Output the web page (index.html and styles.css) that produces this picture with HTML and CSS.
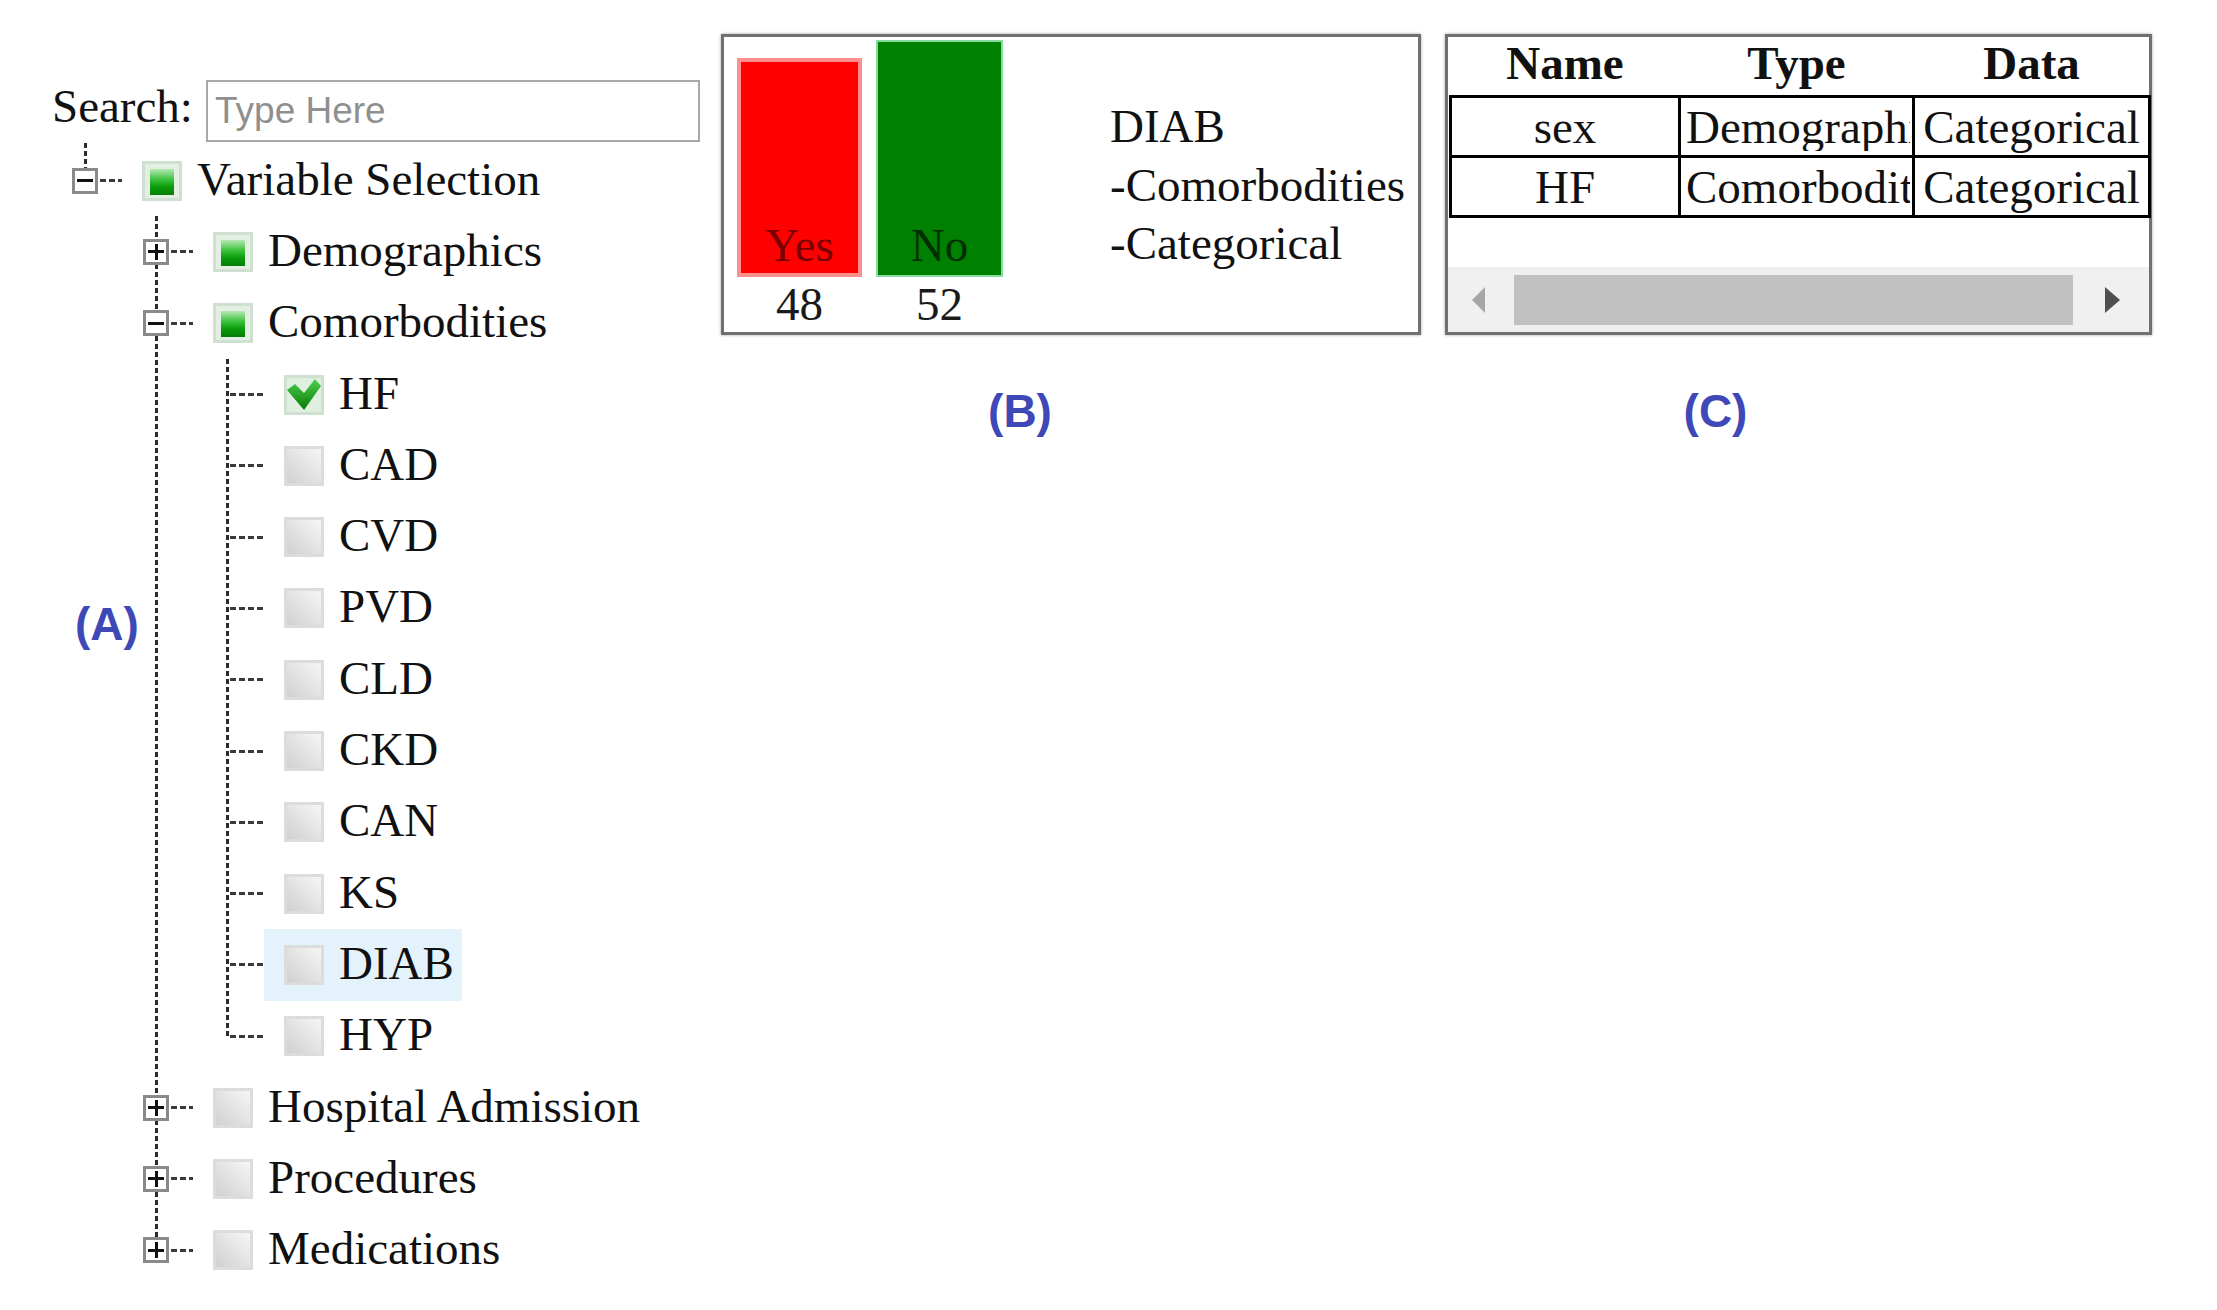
FILE: index.html
```html
<!DOCTYPE html>
<html lang="en">
<head>
<meta charset="utf-8">
<title>Variable Selection</title>
<link rel="stylesheet" href="styles.css">
</head>
<body>
<div class="page">
  <div class="left">
    <div class="search">
      <label class="search-label" for="q">Search:</label>
      <input id="q" type="text" placeholder="Type Here">
    </div>
    <div class="tree">
      <div class="row l0"><span class="tog minus"><i class="up"></i></span><span class="dash"></span><span class="item"><span class="cb part"></span><span class="lbl">Variable Selection</span></span></div>
      <div class="kids k1">
        <div class="row l1"><span class="tog plus"></span><span class="dash"></span><span class="item"><span class="cb part"></span><span class="lbl">Demographics</span></span></div>
        <div class="row l1"><span class="tog minus"></span><span class="dash"></span><span class="item"><span class="cb part"></span><span class="lbl">Comorbodities</span></span></div>
        <div class="kids k2">
          <div class="row l2"><span class="tog leaf"></span><span class="dash"></span><span class="item"><span class="cb on"><svg viewBox="0 0 34 34" width="34" height="34"><defs><linearGradient id="gck" x1="0" y1="0" x2="0" y2="1"><stop offset="0" stop-color="#4fd04f"/><stop offset="1" stop-color="#067a06"/></linearGradient></defs><polygon points="0,12 8,6 17,15 28,1 34,8 17,32" fill="url(#gck)"/></svg></span><span class="lbl">HF</span></span></div>
          <div class="row l2"><span class="tog leaf"></span><span class="dash"></span><span class="item"><span class="cb"></span><span class="lbl">CAD</span></span></div>
          <div class="row l2"><span class="tog leaf"></span><span class="dash"></span><span class="item"><span class="cb"></span><span class="lbl">CVD</span></span></div>
          <div class="row l2"><span class="tog leaf"></span><span class="dash"></span><span class="item"><span class="cb"></span><span class="lbl">PVD</span></span></div>
          <div class="row l2"><span class="tog leaf"></span><span class="dash"></span><span class="item"><span class="cb"></span><span class="lbl">CLD</span></span></div>
          <div class="row l2"><span class="tog leaf"></span><span class="dash"></span><span class="item"><span class="cb"></span><span class="lbl">CKD</span></span></div>
          <div class="row l2"><span class="tog leaf"></span><span class="dash"></span><span class="item"><span class="cb"></span><span class="lbl">CAN</span></span></div>
          <div class="row l2"><span class="tog leaf"></span><span class="dash"></span><span class="item"><span class="cb"></span><span class="lbl">KS</span></span></div>
          <div class="row l2"><span class="tog leaf"></span><span class="dash"></span><span class="item sel"><span class="cb"></span><span class="lbl">DIAB</span></span></div>
          <div class="row l2"><span class="tog leaf"></span><span class="dash"></span><span class="item"><span class="cb"></span><span class="lbl">HYP</span></span></div>
        </div>
        <div class="row l1"><span class="tog plus"></span><span class="dash"></span><span class="item"><span class="cb"></span><span class="lbl">Hospital Admission</span></span></div>
        <div class="row l1"><span class="tog plus"></span><span class="dash"></span><span class="item"><span class="cb"></span><span class="lbl">Procedures</span></span></div>
        <div class="row l1"><span class="tog plus"></span><span class="dash"></span><span class="item"><span class="cb"></span><span class="lbl">Medications</span></span></div>
      </div>
    </div>
    <div class="tag tag-a">(A)</div>
  </div>

  <div class="right">
    <div class="fig fig-b">
      <div class="panel panel-b">
        <div class="chart">
          <div class="bar-col">
            <div class="bar yes" style="height:219px">Yes</div>
            <div class="count">48</div>
          </div>
          <div class="bar-col">
            <div class="bar no" style="height:237px">No</div>
            <div class="count">52</div>
          </div>
        </div>
        <div class="info">
          <div>DIAB</div>
          <div>-Comorbodities</div>
          <div>-Categorical</div>
        </div>
      </div>
      <div class="tag cap">(B)</div>
    </div>

    <div class="fig fig-c">
      <div class="panel panel-c">
        <table class="grid">
          <colgroup><col class="c1"><col class="c2"><col class="c3"></colgroup>
          <thead>
            <tr><th>Name</th><th>Type</th><th>Data</th></tr>
          </thead>
          <tbody>
            <tr><td>sex</td><td class="l"><span class="clip">Demographics</span></td><td>Categorical</td></tr>
            <tr><td>HF</td><td class="l"><span class="clip">Comorbodities</span></td><td>Categorical</td></tr>
          </tbody>
        </table>
        <div class="hscroll">
          <span class="arr-l"></span>
          <span class="thumb"></span>
          <span class="arr-r"></span>
        </div>
      </div>
      <div class="tag cap">(C)</div>
    </div>
  </div>
</div>
</body>
</html>
```

FILE: styles.css
```css
html, body {
  margin: 0;
  padding: 0;
  background: #ffffff;
}

body {
  font-family: "Liberation Serif", "Times New Roman", serif;
  color: #111111;
}

.page {
  display: flex;
  width: 2217px;
  height: 1310px;
  overflow: hidden;
}

/* ---------- left: search + tree ---------- */
.left {
  position: relative;
  flex: none;
  width: 721px;
  padding-top: 80px;
  box-sizing: border-box;
}

.search {
  display: flex;
  align-items: flex-start;
  padding-left: 52px;
  height: 62px;
}

.search-label {
  flex: none;
  width: 154px;
  font-size: 47px;
  line-height: 62px;
  margin-top: -5px;
}

.search input {
  flex: none;
  width: 494px;
  height: 62px;
  box-sizing: border-box;
  margin: 0;
  border: 2px solid #a9a9a9;
  padding: 0 0 0 7px;
  font-family: "Liberation Sans", Arial, sans-serif;
  font-size: 37px;
  color: #333;
  background: #fff;
  outline: none;
}

.search input::placeholder {
  color: #8f8f8f;
}

.tree {
  margin-top: 3px;
}

.row {
  display: flex;
  align-items: center;
  height: 71.3px;
}

.l0 { padding-left: 72px; }
.l1 { padding-left: 143px; }
.l2 { padding-left: 214px; }

.kids {
  position: relative;
}

.kids::before {
  content: "";
  position: absolute;
  top: 0;
  bottom: 35.65px;
  width: 3px;
  background: repeating-linear-gradient(to bottom, #2a2a2a 0 5px, transparent 5px 8px);
}

.k1::before { left: 155px; }
.k2::before { left: 226px; }

.tog {
  position: relative;
  flex: none;
  width: 26px;
  height: 26px;
  box-sizing: border-box;
  border: 3px solid #8a8a8a;
  background: #fff;
}

.tog.leaf {
  border: 0;
  background: transparent;
}

.minus::before,
.plus::before {
  content: "";
  position: absolute;
  left: 2px;
  right: 2px;
  top: 50%;
  height: 3px;
  margin-top: -1.5px;
  background: #111;
}

.plus::after {
  content: "";
  position: absolute;
  top: 2px;
  bottom: 2px;
  left: 50%;
  width: 3px;
  margin-left: -1.5px;
  background: #111;
}

.up {
  position: absolute;
  left: 9px;
  bottom: calc(100% + 3px);
  width: 3px;
  height: 25px;
  background: repeating-linear-gradient(to bottom, #2a2a2a 0 5px, transparent 5px 8px);
}

.dash {
  flex: none;
  width: 22px;
  height: 3px;
  margin-left: 2px;
  background: repeating-linear-gradient(to right, #3a3a3a 0 6px, transparent 6px 9px);
}

.l2 .dash {
  margin-left: -10px;
  width: 34px;
}

.item {
  display: flex;
  align-items: center;
  align-self: stretch;
  padding: 0 8px 0 20px;
}

.item.sel {
  background: #e4f2fb;
}

.cb {
  position: relative;
  flex: none;
  width: 40px;
  height: 40px;
  box-sizing: border-box;
  border: 3px solid #dcdcdc;
  background: linear-gradient(45deg, #d0d0d0, #f6f6f6);
}

.cb.part {
  border-color: #d0e0d0;
  background: #e3efe3;
}

.cb.part::after {
  content: "";
  position: absolute;
  left: 5px;
  right: 5px;
  top: 5px;
  bottom: 3px;
  background: linear-gradient(to bottom, #b5e8b5 0%, #3cc23c 40%, #0a9a0a 70%, #067e06 100%);
}

.cb.on {
  border-color: #d0e0d0;
  background: #e0f0e0;
}

.cb.on svg {
  display: block;
}

.lbl {
  font-size: 47px;
  line-height: 48px;
  margin-left: 15px;
  margin-bottom: 4px;
  white-space: nowrap;
}

/* ---------- labels ---------- */
.tag {
  font-family: "Liberation Sans", Arial, sans-serif;
  font-weight: bold;
  font-size: 46px;
  line-height: 52px;
  color: #3e48b6;
}

.tag-a {
  position: absolute;
  left: 75px;
  top: 598px;
}

/* ---------- right: panels ---------- */
.right {
  display: flex;
  align-items: flex-start;
  gap: 24px;
  padding-top: 34px;
}

.fig {
  display: flex;
  flex-direction: column;
}

.panel {
  height: 301px;
  box-sizing: border-box;
  border: 3px solid #707070;
  box-shadow: 0 0 3px rgba(0, 0, 0, 0.35);
  background: #fff;
}

.cap {
  margin-top: 50px;
  text-align: center;
}

.fig-b .cap { padding-right: 102px; }
.fig-c .cap { padding-right: 166px; }

/* panel B */
.panel-b {
  width: 700px;
  display: flex;
  align-items: flex-start;
}

.chart {
  display: flex;
  gap: 14px;
  padding-left: 13px;
  height: 100%;
}

.bar-col {
  display: flex;
  flex-direction: column;
  justify-content: flex-end;
}

.bar {
  display: flex;
  align-items: flex-end;
  justify-content: center;
  box-sizing: border-box;
  font-size: 47px;
  line-height: 48px;
}

.bar.yes {
  width: 125px;
  background: #ff0000;
  border: 4px solid #ff8f8f;
  padding-bottom: 4px;
  color: #7a0000;
}

.bar.no {
  width: 127px;
  background: #008000;
  border: 2px solid #86dca0;
  padding-bottom: 6px;
  color: #002e00;
}

.count {
  height: 55px;
  line-height: 55px;
  font-size: 47px;
  text-align: center;
  color: #1a1a1a;
}

.info {
  margin: 60px 0 0 107px;
  font-size: 47px;
  line-height: 58.5px;
  white-space: nowrap;
}

/* panel C */
.panel-c {
  width: 707px;
  display: flex;
  flex-direction: column;
}

.grid {
  border-collapse: collapse;
  table-layout: fixed;
  width: 699px;
  margin-left: 1px;
  font-size: 47px;
}

.grid col.c1 { width: 229px; }
.grid col.c2 { width: 234px; }
.grid col.c3 { width: 236px; }

.grid th {
  height: 56px;
  padding: 2px 0 0;
  vertical-align: top;
  line-height: 48px;
  font-weight: bold;
  text-align: center;
}

.grid td {
  height: 57px;
  padding: 0 2px;
  border: 3px solid #000;
  line-height: 48px;
  text-align: center;
  white-space: nowrap;
  overflow: hidden;
  vertical-align: middle;
}

.grid td.l {
  text-align: left;
  padding-left: 5px;
}

.clip {
  display: block;
  overflow: hidden;
  white-space: nowrap;
}

.hscroll {
  margin-top: auto;
  height: 65px;
  background: #f0f0f0;
  display: flex;
  align-items: center;
}

.arr-l {
  flex: none;
  margin-left: 24px;
  width: 0;
  height: 0;
  border-top: 13px solid transparent;
  border-bottom: 13px solid transparent;
  border-right: 13px solid #a6a6a6;
}

.thumb {
  flex: none;
  margin-left: 29px;
  width: 559px;
  height: 50px;
  background: #c1c1c1;
}

.arr-r {
  flex: none;
  margin-left: 32px;
  width: 0;
  height: 0;
  border-top: 13px solid transparent;
  border-bottom: 13px solid transparent;
  border-left: 15px solid #4f4f4f;
}
```
